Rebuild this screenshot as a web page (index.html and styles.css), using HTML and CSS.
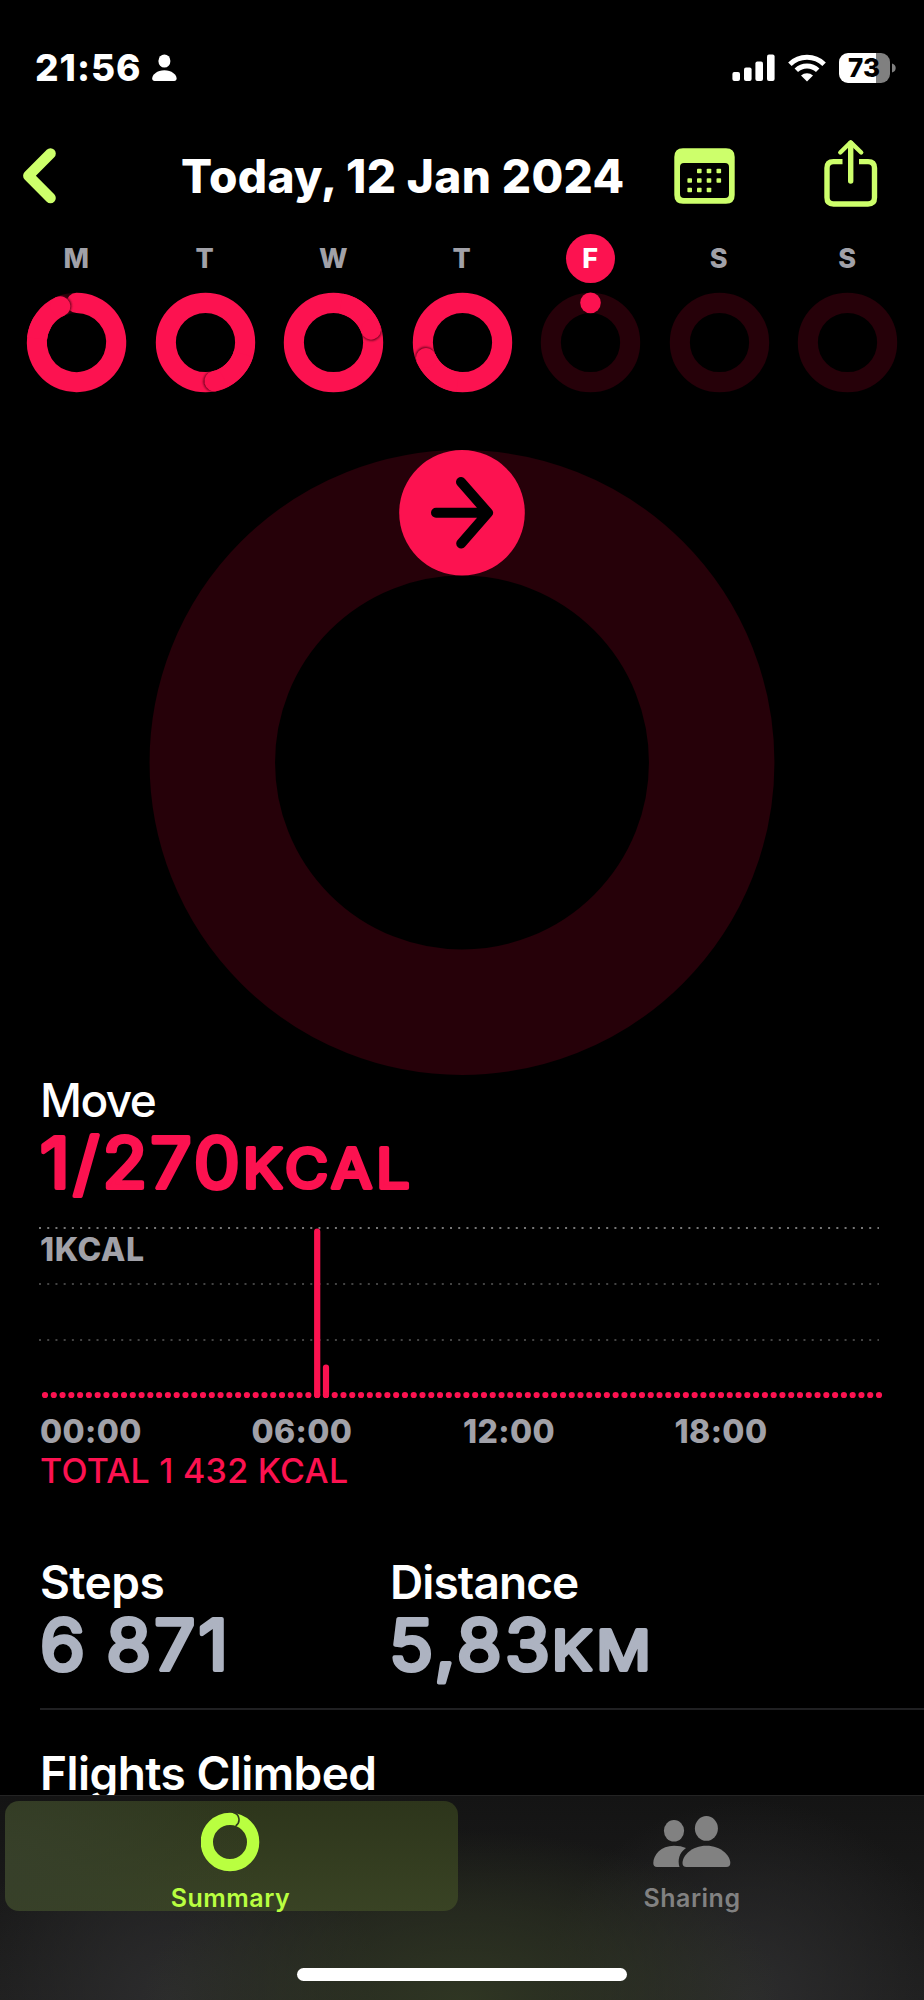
FILE: index.html
```html
<!DOCTYPE html>
<html lang="en">
<head>
<meta charset="utf-8">
<title>Activity</title>
<link rel="stylesheet" href="styles.css">
</head>
<body>
<svg class="defs" width="0" height="0" aria-hidden="true">
  <defs>
    <clipPath id="band"><path clip-rule="evenodd" d="M0-49.7A49.7 49.7 0 0 1 0 49.7A49.7 49.7 0 0 1 0-49.7ZM0-29.6A29.6 29.6 0 0 0 0 29.6A29.6 29.6 0 0 0 0-29.6Z"/></clipPath>
    <filter id="soft" x="-50%" y="-50%" width="200%" height="200%"><feGaussianBlur stdDeviation="0.9"/></filter>
    <g id="ring-head">
      <g clip-path="url(#band)"><circle cx="0.8" cy="-39.7" r="10.3" fill="#5a0018" filter="url(#soft)"/></g>
      <path d="M-34.3-19.8A39.65 39.65 0 0 1 0-39.65" fill="none" stroke="#fc1250" stroke-width="20.1"/>
      <circle cx="0" cy="-39.65" r="10.05" fill="#fc1250"/>
    </g>
  </defs>
</svg>
<div class="screen">
  <header class="status">
    <div class="status-left">
      <span class="clock">21:56</span>
      <svg width="25" height="28" viewBox="0 0 25 28" fill="#fff"><ellipse cx="12.4" cy="7" rx="6" ry="6.6"/><path d="M2.6 27C1 27 .2 26.100 .2 24.500 .2 20.500 5.200 16.200 12.400 16.200S24.600 20.500 24.600 24.500C24.600 26.100 23.800 27 22.200 27Z"/></svg>
    </div>
    <div class="status-right">
      <svg width="43" height="28" viewBox="0 0 43 28" fill="#fff"><rect x=".4" y="18" width="7.600" height="9" rx="2"/><rect x="12" y="13.500" width="7.600" height="13.500" rx="2"/><rect x="23.400" y="7.500" width="7.600" height="19.500" rx="2"/><rect x="35" y=".5" width="7.600" height="26.500" rx="2"/></svg>
      <svg width="38" height="28" viewBox="0 0 38 28"><g fill="none" stroke="#fff" stroke-width="5"><path d="M1.900 10.200A24.500 24.500 0 0 1 36.100 10.200"/><path d="M8.300 16.300A15.500 15.500 0 0 1 29.700 16.300"/></g><path d="M19 27.500L13 21.500A9 9 0 0 1 25 21.500Z" fill="#fff"/></svg>
      <div class="battery-wrap"><div class="battery">73</div><svg width="4" height="10" viewBox="0 0 4 10"><path d="M0 .5Q3.700 1.500 3.700 5T0 9.500Z" fill="#808080"/></svg></div>
    </div>
  </header>

  <nav class="nav">
    <svg class="back" width="34" height="56" viewBox="0 0 34 56"><path d="M27.500 5.500L5.400 27.700 27.500 50" fill="none" stroke="#cdff6b" stroke-width="10.600" stroke-linecap="round" stroke-linejoin="round"/></svg>
    <h1 class="title">Today, 12 Jan 2024</h1>
    <svg class="calendar" width="61" height="56" viewBox="0 0 61 56" fill="#cdff6b"><path fill-rule="evenodd" d="M9 .3H52Q60.700 .3 60.700 9V47Q60.700 55.700 52 55.700H9Q.3 55.700 .3 47V9Q.3 .3 9 .3ZM10 15Q6 15 6 19V46Q6 50 10 50H51Q55 50 55 46V19Q55 15 51 15Z"/><g><rect x="23" y="20.700" width="4.600" height="4.600" rx=".8"/><rect x="32.700" y="20.700" width="4.600" height="4.600" rx=".8"/><rect x="42.500" y="20.700" width="4.600" height="4.600" rx=".8"/><rect x="13.400" y="30.200" width="4.600" height="4.600" rx=".8"/><rect x="23" y="30.200" width="4.600" height="4.600" rx=".8"/><rect x="32.700" y="30.200" width="4.600" height="4.600" rx=".8"/><rect x="42.500" y="30.200" width="4.600" height="4.600" rx=".8"/><rect x="13.400" y="39.700" width="4.600" height="4.600" rx=".8"/><rect x="23" y="39.700" width="4.600" height="4.600" rx=".8"/><rect x="32.700" y="39.700" width="4.600" height="4.600" rx=".8"/></g></svg>
    <svg class="share" width="54" height="69" viewBox="0 0 54 69" fill="none" stroke="#cdff6b" stroke-width="5.400"><path d="M18.500 22.600H9.500Q3 22.600 3 29V58.500Q3 65 9.500 65H44Q50.500 65 50.500 58.500V29Q50.500 22.600 44 22.600H35"/><path d="M26.700 42V4.500" stroke-linecap="round"/><path d="M16.300 13.500L26.700 3.300 37.200 13.500" stroke-width="4.400" stroke-linecap="round" stroke-linejoin="round"/></svg>
  </nav>

  <section class="week">
    <div class="day"><span class="letter">M</span><svg class="ring" viewBox="-50.500 -50.500 100 100"><circle class="track" r="39.65"/><path class="arc" d="M0-39.650A39.650 39.650 0 1 1 -34.300-19.800"/><use href="#ring-head" transform="rotate(-24)"/></svg></div>
    <div class="day"><span class="letter">T</span><svg class="ring" viewBox="-50.500 -50.500 100 100"><circle class="full" r="39.65"/><use href="#ring-head" transform="rotate(167)"/></svg></div>
    <div class="day"><span class="letter">W</span><svg class="ring" viewBox="-50.500 -50.500 100 100"><circle class="full" r="39.65"/><use href="#ring-head" transform="rotate(71)"/></svg></div>
    <div class="day"><span class="letter">T</span><svg class="ring" viewBox="-50.500 -50.500 100 100"><circle class="full" r="39.65"/><use href="#ring-head" transform="rotate(247)"/></svg></div>
    <div class="day"><span class="letter today">F</span><svg class="ring" viewBox="-50.500 -50.500 100 100"><circle class="track" r="39.65"/><circle cy="-39.650" r="10.300" fill="#fc1250"/></svg></div>
    <div class="day"><span class="letter">S</span><svg class="ring" viewBox="-50.500 -50.500 100 100"><circle class="track" r="39.65"/></svg></div>
    <div class="day"><span class="letter">S</span><svg class="ring" viewBox="-50.500 -50.500 100 100"><circle class="track" r="39.65"/></svg></div>
  </section>

  <svg class="big-ring" width="626" height="626" viewBox="-313 -312.500 626 626">
    <circle r="249.700" fill="none" stroke="#260109" stroke-width="125.500"/>
    <circle cy="-249.700" r="62.800" fill="#fc1250"/>
    <path d="M-26-249.700H26M-1-280.500L26-249.700-.8-219" fill="none" stroke="#000" stroke-width="10" stroke-linecap="round" stroke-linejoin="round"/>
  </svg>

  <section class="move">
    <h2 class="label">Move</h2>
    <svg class="value red" width="400" height="80"><text class="num" x="0" y="64.500" textLength="203" lengthAdjust="spacingAndGlyphs">1/270</text><text class="unit" x="203" y="64.500" textLength="171" lengthAdjust="spacingAndGlyphs">KCAL</text></svg>
    <svg class="chart" width="884" height="198" viewBox="0 0 884 198">
      <g class="grid"><path class="top-line" d="M-1 25H839"/><path d="M-1 81H839"/><path d="M-1 137H839"/></g>
      <path class="dots" d="M5 192H839.500"/>
      <path class="bars" d="M277.200 28.500V192M286 164.500V192"/>
      <text class="chart-label" x="0" y="57.500" textLength="104">1KCAL</text>
    </svg>
    <div class="hours"><span>00:00</span><span>06:00</span><span>12:00</span><span>18:00</span></div>
    <p class="total">TOTAL 1 432 KCAL</p>
  </section>

  <section class="stats">
    <div class="stat"><h2 class="label">Steps</h2><svg class="value" width="300" height="80"><text class="num" x="0" y="64.500" textLength="191" lengthAdjust="spacingAndGlyphs">6 871</text></svg></div>
    <div class="stat"><h2 class="label">Distance</h2><svg class="value" width="300" height="80"><text class="num" x="-1" y="64.500" textLength="164" lengthAdjust="spacingAndGlyphs">5,83</text><text class="unit" x="162" y="64.500" textLength="103" lengthAdjust="spacingAndGlyphs">KM</text></svg></div>
  </section>
  <section class="flights"><h2 class="label">Flights Climbed</h2></section>

  <footer class="tabbar">
    <div class="tabs">
      <div class="tab active">
        <svg class="tab-icon" width="60" height="60" viewBox="-29 -30 60 60"><circle r="23.150" fill="none" stroke="#b9ff40" stroke-width="12.300"/><path d="M2-29.600A7.500 7.500 0 0 1 4.500-16" transform="translate(1.100 0)" fill="none" stroke="#313a20" stroke-width="1.600"/></svg>
        <span>Summary</span>
      </div>
      <div class="tab">
        <svg class="tab-icon" width="78" height="60" viewBox="0 0 78 60" fill="#818181"><ellipse cx="21" cy="18.800" rx="10.100" ry="10.800"/><ellipse cx="53.400" cy="16.400" rx="11.500" ry="12.400"/><path d="M33 36C26 41 24.500 48 26.500 55H4Q.3 55 .3 51C.3 43 8 33.800 21 33.800Q28 33.800 33 36Z"/><path d="M33.500 55Q29.500 55 29.500 51C29.500 44 38.500 33.800 53.400 33.800S77.300 44 77.300 51Q77.300 55 73.300 55Z"/></svg>
        <span>Sharing</span>
      </div>
    </div>
    <div class="home"></div>
  </footer>
</div>
</body>
</html>
```
FILE: styles.css
```css
* { box-sizing: border-box; }
body { margin: 0; background: #000; }
.defs { position: absolute; }
svg { display: block; flex: none; }
h1, h2, p { margin: 0; }
.screen {
  position: relative;
  width: 924px;
  height: 2000px;
  overflow: hidden;
  background: #000;
  color: #fff;
  font-family: Inter, "Liberation Sans", sans-serif;
}

.status { display: flex; justify-content: space-between; height: 135px; padding: 0 28px 0 35px; align-items: center; }
.status-left { display: flex; align-items: center; gap: 12px; }
.clock { width: 105px; font-size: 37px; font-weight: 800; letter-spacing: 1px; white-space: nowrap; }
.status-right { display: flex; align-items: center; gap: 13px; }
.battery-wrap { display: flex; align-items: center; gap: 2px; }
.battery {
  width: 51px;
  height: 30px;
  padding-right: 1px;
  border-radius: 9px;
  background: linear-gradient(to right, #fff 37px, #808080 37px);
  color: #000;
  font-size: 26px;
  font-weight: 800;
  line-height: 30px;
  text-align: center;
}

.nav { display: flex; align-items: center; height: 81px; padding-left: 23px; }
.title { width: 442px; margin-left: 124px; font-size: 46px; font-weight: 800; line-height: 60px; white-space: nowrap; letter-spacing: .35px; }
.calendar { margin-left: 51px; }
.share { margin-left: 89px; margin-bottom: 5px; }

.week { display: grid; grid-template-columns: repeat(7, 128.5px); padding: 18px 0 0 12px; }
.day { display: flex; flex-direction: column; align-items: center; gap: 9px; }
.letter { width: 49px; height: 49px; border-radius: 50%; color: #a1a1a8; font-size: 27px; font-weight: 800; line-height: 49px; text-align: center; }
.today { background: #fc1250; color: #fff; }
.ring { width: 100px; height: 100px; overflow: visible; }
.track, .full, .arc { fill: none; stroke-width: 20.100px; }
.track { stroke: #260109; }
.full { stroke: #fc1250; }
.arc { stroke: #fc1250; stroke-linecap: round; }

.big-ring { margin: 58px auto 0; }

.move { padding: 1px 0 0 40px; }
.label { font-size: 46px; font-weight: 600; line-height: 46px; letter-spacing: -.55px; white-space: nowrap; }
.move .label { font-weight: 550; letter-spacing: -1.6px; }
.value { fill: #adb3c1; stroke: #adb3c1; overflow: visible; }
.red { fill: #fc1250; stroke: #fc1250; }
.num, .unit { font-weight: 400; stroke-width: 4.200px; stroke-linejoin: round; stroke-linecap: round; }
.num { font-size: 70px; letter-spacing: 3px; word-spacing: -5px; }
.unit { font-size: 55px; letter-spacing: 4px; }
.chart { overflow: visible; }
.grid path { fill: none; stroke: #434343; stroke-width: 2px; stroke-dasharray: 2px 6.220px; }
.grid .top-line { stroke: #777; }
.dots, .bars { fill: none; stroke: #fc1250; stroke-width: 6.200px; stroke-linecap: round; }
.dots { stroke-dasharray: 0 8.779px; }
.chart-label { fill: #a1a1a8; font-size: 32px; font-weight: 800; }
.hours { display: grid; grid-template-columns: repeat(4, 211.5px); margin-top: 11px; color: #a1a1a8; font-size: 32px; font-weight: 800; line-height: 40px; letter-spacing: .4px; }
.total { color: #fc1250; font-size: 34px; font-weight: 500; line-height: 38px; letter-spacing: .25px; white-space: nowrap; }

.stats { display: grid; grid-template-columns: 350px 1fr; height: 151px; margin: 69px 0 0 40px; border-bottom: 2px solid #202022; }
.stat:last-child .label { letter-spacing: -.9px; }
.flights { padding: 40px 0 0 40px; }

.tabbar {
  position: absolute;
  left: 0;
  right: 0;
  bottom: 0;
  height: 205px;
  border-top: 1px solid #232323;
  background:
    radial-gradient(ellipse 320px 170px at 50% 100%, rgba(48, 55, 35, .95), rgba(48, 55, 35, .5) 55%, rgba(48, 55, 35, 0)),
    radial-gradient(ellipse 210px 200px at 170px 100%, #2c2c2d, rgba(44, 44, 45, 0)),
    radial-gradient(ellipse 210px 200px at 750px 100%, #2c2c2d, rgba(44, 44, 45, 0)),
    linear-gradient(#141414, #1e1e1e);
}
.tabs { display: grid; grid-template-columns: 453px 468px; padding: 5px 0 0 5px; }
.tab { display: flex; flex-direction: column; align-items: center; height: 110px; padding-top: 11px; border-radius: 14px; color: #818181; font-size: 25px; font-weight: 600; line-height: 30px; letter-spacing: .5px; }
.tab span { margin-top: 11px; }
.active { padding-right: 2px; background: radial-gradient(ellipse 250px 200px at 0 60%, #37402a, rgba(55, 64, 42, 0)), linear-gradient(#2d351b, #394324); color: #b9ff40; }
.home { width: 330px; height: 13px; margin: 57px auto 0; border-radius: 7px; background: #fff; }
```
